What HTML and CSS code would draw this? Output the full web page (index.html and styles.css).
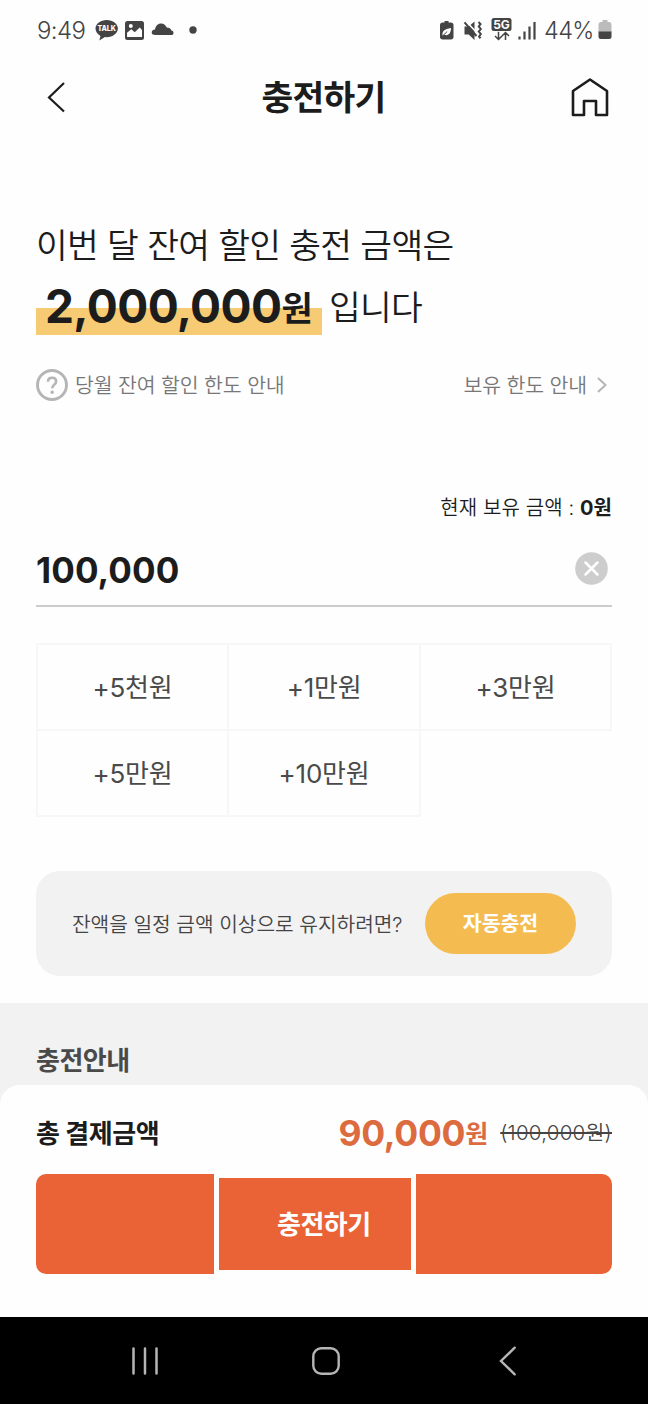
FILE: index.html
```html
<!DOCTYPE html>
<html lang="ko">
<head>
<meta charset="utf-8">
<title>충전하기</title>
<link rel="stylesheet" href="styles.css">
</head>
<body>
<div class="status">
  <span class="clock">9:49</span>
  <svg class="status-left" width="104" height="24" viewBox="0 0 104 24">
    <path fill="#444" d="M11.700 2C5.500 2 .5 5.800 .5 10.600c0 3.200 2 5.900 5 7.300L4.300 22.600l5.600-3.500 1.800.1c6.200 0 11.200-3.800 11.200-8.600S17.900 2 11.700 2z"/>
    <text class="talk" x="11.700" y="13.200" text-anchor="middle">TALK</text>
    <rect x="30" y="3" width="19" height="19" rx="2.500" fill="#444"/>
    <path fill="#fff" d="M32 19v-4.200l4.300-3.600 3.400 3 5-4.700 2.300 2.500v7z"/>
    <circle cx="35.800" cy="8" r="2" fill="#fff"/>
    <path fill="#444" d="M60.500 17c-2.200 0-3.800-.7-3.800-2.500 0-1.900 1.500-2.900 3.300-3C60.600 7.800 63 5.500 66 5.500c2.900 0 4.900 1.800 5.700 4 3 .1 4.400 1.500 4.700 3.100 1.500.3 2.100 1.200 2.100 2.300 0 1.400-.9 2.100-2.200 2.100z"/>
    <circle cx="98" cy="12" r="3.700" fill="#444"/>
  </svg>
  <svg class="status-right" width="96" height="24" viewBox="0 0 96 24">
    <path fill="#444" d="M4.500 3h4v1.500h2.300a2.700 2.700 0 0 1 2.700 2.700v11.600a2.700 2.700 0 0 1-2.700 2.700H2.700A2.700 2.700 0 0 1 0 18.800V7.200a2.700 2.700 0 0 1 2.700-2.700h1.800z"/>
    <path fill="#fff" d="M2.500 17.500c-.5-4 1.800-6.600 8.500-7.500 0 5-2.500 8.200-6.500 6.800z"/>
    <path d="M3 17.500l4.200-4" stroke="#444" stroke-width="1"/>
    <path fill="#444" d="M24.500 8.500h4.200l5.800-5V22l-5.800-5.500h-4.200z"/>
    <path d="M26 3.300L39 17" stroke="#fff" stroke-width="1.600"/>
    <path d="M24.500 4.300L36.500 18" stroke="#444" stroke-width="2"/>
    <path d="M38.500 4l2 2-1.700 2.500 2 2.500-2 2.500 2 2.500-1.700 2.500 1.400 1.800" fill="none" stroke="#444" stroke-width="2"/>
    <rect x="51.500" y="0" width="20" height="13" rx="2.500" fill="#444"/>
    <text class="fiveg" x="61.500" y="11" text-anchor="middle">5G</text>
    <path d="M58.500 13.800V21m-3.500-3l3.500 3.500L62 18M65.500 22v-7m-3.500 3l3.500-3.500L69 18" fill="none" stroke="#444" stroke-width="1.500"/>
    <path d="M79.500 18.500v3M84.500 13.500v8M89.500 8.500v13M94.500 4v17.500" stroke="#444" stroke-width="2.200"/>
  </svg>
  <span class="percent">44%</span>
  <svg class="battery" width="14" height="20" viewBox="0 0 14 20">
    <path fill="#bbb" d="M4.500 0h5v2h1.800A2.500 2.500 0 0 1 13.500 4.500V12H.500V4.500A2.500 2.500 0 0 1 2.700 2h1.800z"/>
    <path fill="#444" d="M.5 11.500h13v5a2.500 2.500 0 0 1-2.500 2.500H3a2.500 2.500 0 0 1-2.500-2.500z"/>
  </svg>
</div>
<header class="header">
  <svg width="20" height="34" viewBox="0 0 20 34"><path d="M17 3L2 17.500 17 31.500" fill="none" stroke="#1c1c1c" stroke-width="2.200"/></svg>
  <h1 class="title">충전하기</h1>
  <svg width="38" height="40" viewBox="0 0 38 40"><path d="M2 14L19 2.500l17 11.500V38H25V24H13v14H2z" fill="none" stroke="#1c1c1c" stroke-width="2.600" stroke-linejoin="round"/></svg>
</header>
<main class="main">
  <div class="lead">이번 달 잔여 할인 충전 금액은</div>
  <div class="lead-row"><span class="mark"><span class="mark-num">2,000,000</span><span class="mark-won">원</span></span><span class="lead-end">입니다</span></div>
  <div class="links">
    <svg width="32" height="32" viewBox="0 0 32 32"><circle cx="16" cy="16" r="14.500" fill="none" stroke="#b5b5b5" stroke-width="2.900"/><path d="M12 12.800c0-2.600 1.700-4.100 4.100-4.100s4 1.500 4 3.700c0 3.200-3.900 3.300-3.900 6.900" fill="none" stroke="#b5b5b5" stroke-width="2.600"/><circle cx="16.200" cy="23.200" r="1.700" fill="#b5b5b5"/></svg>
    <span class="link-a">당월 잔여 할인 한도 안내</span>
    <span class="link-b">보유 한도 안내</span>
    <svg width="10" height="16" viewBox="0 0 10 16"><path d="M1 1l7.500 7L1 15" fill="none" stroke="#b5b5b5" stroke-width="2"/></svg>
  </div>
  <div class="balance"><span>현재 보유 금액 :</span> <b class="balance-num">0원</b></div>
  <div class="field">
    <span class="amount">100,000</span>
    <svg width="33" height="33" viewBox="0 0 33 33"><circle cx="16.500" cy="16.500" r="16.300" fill="#cdcdcd"/><path d="M10.500 10.500l12 12m0-12l-12 12" stroke="#fff" stroke-width="2.500" stroke-linecap="round"/></svg>
  </div>
  <div class="grid">
    <div class="cell">+5천원</div><div class="cell">+1만원</div><div class="cell">+3만원</div>
    <div class="cell">+5만원</div><div class="cell">+10만원</div>
  </div>
  <div class="auto">
    <span class="auto-text">잔액을 일정 금액 이상으로 유지하려면?</span>
    <span class="auto-btn">자동충전</span>
  </div>
</main>
<section class="guide"><h2 class="guide-title">충전안내</h2></section>
<section class="sheet">
  <div class="total">
    <span class="total-label">총 결제금액</span>
    <span class="total-num">90,000</span><span class="total-won">원</span>
    <span class="total-old">(100,000원)</span>
  </div>
  <div class="pay">
    <div class="pay-side pay-left"></div>
    <div class="pay-mid"><span class="pay-text">충전하기</span></div>
    <div class="pay-side pay-right"></div>
  </div>
</section>
<nav class="nav">
  <svg width="28" height="28" viewBox="0 0 28 28"><path d="M2.500 1.500v25M14 1.500v25M25.500 1.500v25" stroke="#b5b5b5" stroke-width="2.500" stroke-linecap="round"/></svg>
  <svg class="nav-home" width="28" height="28" viewBox="0 0 28 28"><rect x="1.300" y="1.300" width="25.400" height="25.400" rx="8" fill="none" stroke="#b5b5b5" stroke-width="2.400"/></svg>
  <svg class="nav-back" width="18" height="30" viewBox="0 0 18 30"><path d="M15.700 1.700L2 15l13.700 13.300" fill="none" stroke="#b5b5b5" stroke-width="2.400" stroke-linecap="round"/></svg>
</nav>
</body>
</html>
```

FILE: styles.css
```css
* { box-sizing: border-box; }
body {
  margin: 0;
  width: 648px;
  height: 1404px;
  overflow: hidden;
  display: flex;
  flex-direction: column;
  background: #fefefe;
  color: #1c1c1c;
  font-family: Inter, "Noto Sans CJK KR", sans-serif;
  white-space: nowrap;
}
svg { display: block; flex: none; }
.status { height: 60px; padding: 0 36px 0 37px; display: flex; align-items: center; color: #444; }
.clock { width: 58px; padding-top: 1px; font-size: 24px; line-height: 60px; font-weight: 350; letter-spacing: -.6px; }
.status-left { margin-top: -1px; }
.talk { font: 800 7px Inter, sans-serif; fill: #fff; }
.fiveg { font: 700 12px Inter, sans-serif; fill: #fff; }
.status-right { margin-left: auto; }
.percent { width: 50px; margin-left: 8px; font-size: 23.500px; font-weight: 350; letter-spacing: -.6px; }
.battery { margin-left: 4px; }
.header { height: 74px; padding: 0 39px 0 47px; display: flex; align-items: center; justify-content: space-between; }
.title { margin: 2px 0 0 9px; font-size: 34.500px; line-height: 60px; font-weight: 700; letter-spacing: -.8px; }
.main { height: 869px; padding: 82px 36px 0; flex: none; }
.lead, .lead-end { font-size: 34.500px; font-weight: 350; letter-spacing: -.7px; }
.lead { line-height: 60px; }
.lead-row { height: 60px; margin-top: -1px; display: flex; align-items: center; }
.mark {
  width: 286px;
  height: 60px;
  padding-left: 9px;
  display: flex;
  align-items: baseline;
  line-height: 62px;
  font-weight: 700;
  background: linear-gradient(#f6cb74, #f6cb74) 0 33px / 100% 27px no-repeat;
}
.mark-num { font-size: 46px; letter-spacing: -.6px; }
.mark-won { font-size: 34px; position: relative; top: -2px; }
.lead-end { margin-left: 7px; }
.links { height: 32px; margin-top: 34px; display: flex; align-items: center; font-size: 20.500px; line-height: 30px; font-weight: 350; letter-spacing: -.15px; color: #777; }
.link-a, .link-b { padding-top: 1px; }
.link-a { margin-left: 7px; }
.link-b { margin-left: auto; margin-right: 10px; }
.links svg:last-child { margin-right: 5px; }
.balance { height: 30px; margin-top: 91px; line-height: 32px; text-align: right; font-size: 20px; font-weight: 350; word-spacing: .3px; }
.balance-num { font-weight: 700; }
.field { height: 85px; display: flex; align-items: center; justify-content: space-between; padding: 9px 4px 0 0; border-bottom: 2px solid #ccc; }
.amount { padding-top: 3px; font-size: 35px; font-weight: 700; letter-spacing: .1px; }
.grid { height: 174px; margin-top: 36px; display: grid; grid-template-columns: 192px 192px 191px; grid-template-rows: 87px 86px; }
.cell { display: flex; align-items: center; justify-content: center; margin: 0 -1px -1px 0; padding: 0 0 3px; border: 2px solid #f7f7f7; font-size: 26px; letter-spacing: -.25px; color: #4a4a4a; }
.cell:nth-child(n+2) { margin-left: -1px; }
.cell:nth-child(4) { margin-left: 0; }
.cell:nth-child(n+4) { margin-top: -1px; }
.auto { height: 105px; margin-top: 54px; padding: 0 36px; border-radius: 24px; background: #f2f2f2; display: flex; align-items: center; justify-content: space-between; }
.auto-text { padding-bottom: 2px; font-size: 20.300px; letter-spacing: -.05px; font-weight: 350; color: #444; }
.auto-btn { width: 151px; height: 61px; border-radius: 31px; background: #f4bc50; color: #fff; font-size: 20.500px; font-weight: 700; line-height: 62px; text-align: center; }
.guide { height: 102px; flex: none; margin-bottom: -20px; padding: 38px 36px 0; background: #f2f2f2; }
.guide-title { margin: 0; font-size: 26px; line-height: 40px; font-weight: 700; letter-spacing: -.5px; color: #4a4a4a; }
.sheet { height: 232px; flex: none; padding: 28px 36px 0; border-radius: 20px 20px 0 0; background: #fefefe; }
.total { height: 40px; display: flex; align-items: center; line-height: 40px; }
.total-label { font-size: 26px; font-weight: 700; letter-spacing: -.4px; margin: 2px auto 0 0; }
.total-num { margin-top: 2px; font-size: 35.500px; font-weight: 700; letter-spacing: -.3px; color: #dc6b40; }
.total-won { margin-top: 2px; font-size: 25px; font-weight: 700; color: #dc6b40; }
.total-old { margin: 0 0 0 12px; font-size: 20.500px; letter-spacing: .25px; font-weight: 350; color: #444; text-decoration: line-through; }
.pay { height: 101px; margin-top: 20px; display: flex; align-items: center; gap: 5px; }
.pay-side { height: 100px; background: #ea6336; }
.pay-left { width: 178px; border-radius: 10px 0 0 10px; }
.pay-right { width: 196px; border-radius: 0 10px 10px 0; }
.pay-mid { width: 192px; height: 92px; padding-left: 58px; background: #ea6336; color: #fff; line-height: 94px; }
.pay-text { font-size: 26px; font-weight: 700; letter-spacing: -.5px; }
.nav { height: 87px; flex: none; padding: 0 131px; background: #000; display: flex; align-items: center; justify-content: space-between; }
.nav-home { margin-right: 6px; }
```
